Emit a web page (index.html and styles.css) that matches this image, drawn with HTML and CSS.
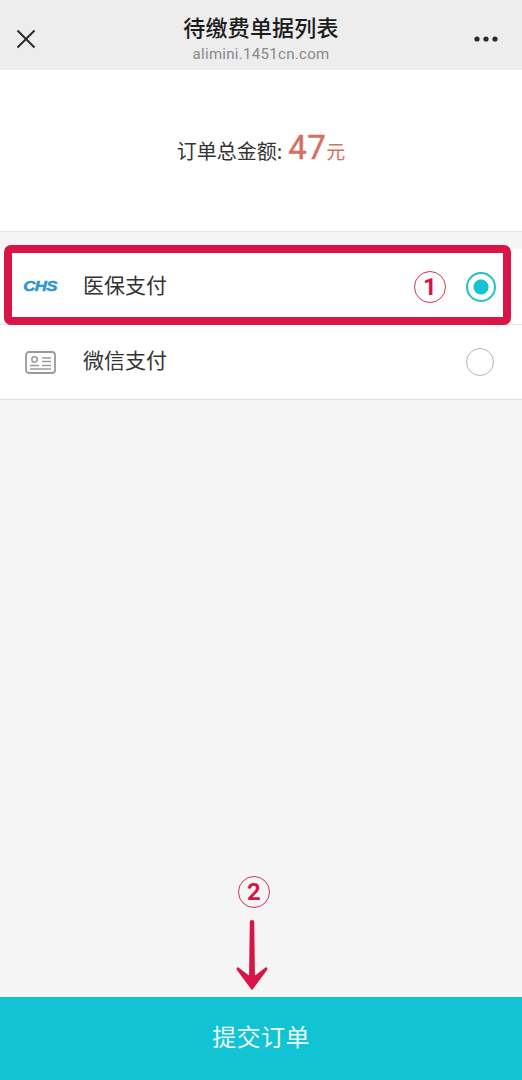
FILE: index.html
```html
<!DOCTYPE html>
<html lang="zh-CN">
<head>
  <meta charset="UTF-8">
  <title>待缴费单据列表</title>
  <meta name="viewport" content="width=device-width, initial-scale=1.0">
  <link rel="stylesheet" href="styles.css">
</head>
<body>
  <div class="page">
    <header class="nav">
      <svg class="nav-close" width="22" height="22" viewBox="0 0 22 22">
        <path d="M2.5 2.5 L19.5 19.5 M19.5 2.5 L2.5 19.5" stroke="#2b2b2b" stroke-width="2" fill="none"/>
      </svg>
      <div class="nav-titles">
        <div class="nav-title">待缴费单据列表</div>
        <div class="nav-host">alimini.1451cn.com</div>
      </div>
      <svg class="nav-more" width="24" height="6" viewBox="0 0 24 6">
        <circle cx="3" cy="3" r="2.6" fill="#2b2b2b"/>
        <circle cx="12" cy="3" r="2.6" fill="#2b2b2b"/>
        <circle cx="21" cy="3" r="2.6" fill="#2b2b2b"/>
      </svg>
    </header>

    <section class="total">
      <span class="total-label">订单总金额:</span>
      <span class="total-num">47</span>
      <span class="total-unit">元</span>
    </section>

    <section class="pay-list">
      <div class="pay-row">
        <div class="pay-icon"><span class="chs">CHS</span></div>
        <div class="pay-name">医保支付</div>
        <div class="mark mark-one">1</div>
        <div class="radio radio-on"></div>
        <div class="highlight"></div>
      </div>
      <div class="pay-row">
        <div class="pay-icon">
          <svg width="31" height="23" viewBox="0 0 31 23">
            <rect x="1" y="1" width="29" height="21" rx="3" fill="none" stroke="#9a9a9a" stroke-width="1.8"/>
            <circle cx="9.5" cy="8.5" r="2.7" fill="none" stroke="#9a9a9a" stroke-width="1.5"/>
            <path d="M5 14.5 H14 M5 18 H26 M17 7 H26 M17 10.5 H26 M17 14.5 H26" stroke="#9a9a9a" stroke-width="1.5" fill="none"/>
          </svg>
        </div>
        <div class="pay-name">微信支付</div>
        <div class="radio"></div>
      </div>
    </section>

    <main class="spacer">
      <div class="mark mark-two">2</div>
      <svg class="arrow" width="32" height="72" viewBox="0 0 32 72">
        <path d="M13.8 2.5 Q13.8 1 16 1 Q18.2 1 18.2 2.5 L19 60 H13 Z" fill="#d81546"/>
        <path d="M2 49 L12.5 57 H19.5 L30 49 Q31 49 30.5 50.5 L16 70 L1.5 50.5 Q1 49 2 49 Z" fill="#d81546" stroke="#d81546" stroke-width="1.5" stroke-linejoin="round"/>
      </svg>
    </main>

    <button class="submit">提交订单</button>
  </div>
</body>
</html>
```

FILE: styles.css
```css
html, body {
  margin: 0;
  height: 100%;
  background: #f5f5f5;
  font-family: "Noto Sans CJK SC", "Noto Sans", sans-serif;
  overflow: hidden;
}

.page {
  display: flex;
  flex-direction: column;
  height: 1080px;
}

/* шапка */
.nav {
  height: 70px;
  flex: none;
  box-sizing: border-box;
  display: grid;
  grid-template-columns: 1fr auto 1fr;
  align-items: center;
  padding: 8px 24px 0;
  background: #ededed;
}

.nav-close {
  margin-left: -9px;
}

.nav-more {
  justify-self: end;
}

.nav-titles {
  align-self: start;
  margin-top: 3px;
  text-align: center;
}

.nav-title {
  font-size: 22px;
  line-height: 30px;
  font-weight: 500;
  letter-spacing: 0.2px;
  color: #1c1c1c;
}

.nav-host {
  margin-top: 3px;
  font-family: Roboto, "Noto Sans", sans-serif;
  font-size: 15px;
  line-height: 20px;
  letter-spacing: 0.3px;
  color: #888;
}

.total {
  height: 162px;
  flex: none;
  display: flex;
  align-items: baseline;
  justify-content: center;
  padding-top: 56px;
  box-sizing: border-box;
  background: #fff;
  border-bottom: 1px solid #e3e3e3;
}

.total-label {
  font-size: 20px;
  line-height: 50px;
  color: #333;
}

.total-num {
  font-family: Roboto, sans-serif;
  font-size: 33px;
  font-weight: 400;
  color: #d4705f;
  margin-left: 6px;
  letter-spacing: 0.5px;
  -webkit-text-stroke: 0.4px #d4705f;
}

.total-unit {
  font-size: 19px;
  color: #d4705f;
}

.pay-list {
  margin-top: 17px;
  background: #fff;
  border-bottom: 1px solid #e0e0e0;
}

.pay-row {
  position: relative;
  height: 75px;
  display: flex;
  align-items: center;
  padding: 0 28px 0 24px;
}

.pay-row + .pay-row {
  height: 74px;
  border-top: 1px solid #e6e6e6;
}

.pay-icon {
  width: 32px;
  display: flex;
  justify-content: center;
}

.chs {
  font-family: "Liberation Sans", sans-serif;
  font-size: 14px;
  line-height: 14px;
  font-weight: 700;
  font-style: italic;
  letter-spacing: -0.5px;
  color: #2e96cf;
  -webkit-text-stroke: 0.5px #2e96cf;
  transform: scaleX(1.2);
  margin-top: -2px;
}

.pay-name {
  flex: 1;
  margin-left: 27px;
  padding-bottom: 6px;
  font-size: 21px;
  color: #333;
}

.radio {
  width: 26px;
  height: 26px;
  border: 1px solid #b5b5b5;
  border-radius: 50%;
}

.radio-on {
  box-sizing: border-box;
  width: 30px;
  height: 30px;
  margin-right: -2px;
  border: 2px solid #1fc0cc;
  background: radial-gradient(circle, #12c3d3 0 7px, #fff 8px);
}

.mark {
  box-sizing: border-box;
  width: 32px;
  height: 32px;
  border: 1.5px solid #d0345f;
  border-radius: 50%;
  display: flex;
  align-items: center;
  justify-content: center;
  font-family: Roboto, sans-serif;
  font-size: 24px;
  font-weight: 700;
  color: #d81546;
}

.mark-one {
  margin-right: 20px;
}

.highlight {
  position: absolute;
  z-index: 1;
  left: 4px;
  right: 11px;
  top: -4px;
  bottom: -1px;
  border: 8px solid #d81546;
  border-radius: 7px;
  pointer-events: none;
}

.spacer {
  position: relative;
  flex: 1;
}

.mark-two {
  position: absolute;
  left: 238px;
  bottom: 89px;
}

.arrow {
  position: absolute;
  left: 236px;
  bottom: 6px;
}

.submit {
  height: 83px;
  flex: none;
  border: 0;
  padding: 0 0 6px;
  background: #12c3d3;
  color: #eafafb;
  font-family: inherit;
  font-size: 24px;
  letter-spacing: 0.4px;
}
```
